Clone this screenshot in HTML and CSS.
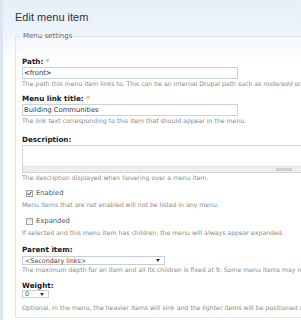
FILE: index.html
```html
<!DOCTYPE html>
<html lang="en">
<head>
    <meta charset="UTF-8">
    <title>Edit menu item</title>
    <link rel="stylesheet" href="styles.css">
</head>
<body>
<div id="page">
    <h2 class="page-title">Edit menu item</h2>
    <fieldset class="settings">
        <legend>Menu settings</legend>
        <div class="form-item">
            <label>Path: <span class="req">*</span></label>
            <input type="text" class="text" value="&lt;front&gt;">
            <div class="desc">The path this menu item links to. This can be an internal Drupal path such as <em>node/add</em> or an external URL.</div>
        </div>
        <div class="form-item item-title">
            <label>Menu link title: <span class="req">*</span></label>
            <input type="text" class="text" value="Building Communities">
            <div class="desc">The link text corresponding to this item that should appear in the menu.</div>
        </div>
        <div class="form-item">
            <label>Description:</label>
            <div class="area">
                <div class="area-bar"><span class="thumb"></span></div>
            </div>
            <div class="desc">The description displayed when hovering over a menu item.</div>
        </div>
        <div class="form-item check item-enabled">
            <div class="check-row">
                <span class="box">
                    <svg width="5" height="5" viewBox="0 0 5 5"><polyline points="0.6,2.6 1.9,4 4.4,0.8" fill="none" stroke="#2c3f66" stroke-width="1"/></svg>
                </span>Enabled
            </div>
            <div class="desc">Menu items that are not enabled will not be listed in any menu.</div>
        </div>
        <div class="form-item check item-expanded">
            <div class="check-row"><span class="box"></span>Expanded</div>
            <div class="desc">If selected and this menu item has children, the menu will always appear expanded.</div>
        </div>
        <div class="form-item item-parent">
            <label>Parent item:</label>
            <div class="select parent"><span>&lt;Secondary links&gt;</span><span class="arrow"></span></div>
            <div class="desc">The maximum depth for an item and all its children is fixed at 9. Some menu items may not be available as parents.</div>
        </div>
        <div class="form-item">
            <label>Weight:</label>
            <div class="select weight"><span>0</span><span class="arrow"></span></div>
            <div class="desc weight-desc">Optional. In the menu, the heavier items will sink and the lighter items will be positioned nearer the top.</div>
        </div>
    </fieldset>
</div>
</body>
</html>
```

FILE: styles.css
```css
*{
    padding: 0;
    margin: 0;
    box-sizing: border-box;
}
body{
    width: 301px;
    height: 320px;
    overflow: hidden;
    background: linear-gradient(#e7eff8 0, #edf3fa 30px, #ffffff 60px);
    border-left: 3px solid #dbe6f2;
    font-family: "DejaVu Sans", Verdana, sans-serif;
    color: #333;
}
#page{
    padding: 11px 0 0 12px;
    width: 420px;
}
.page-title{
    font-family: "Liberation Sans", Arial, sans-serif;
    font-weight: normal;
    font-size: 11px;
    line-height: 13px;
    color: #333;
    margin-bottom: 8px;
}
.settings{
    border: 1px solid #dce6f0;
    border-right: none;
    padding: 15px 0 0 6px;
    background: linear-gradient(#f5f8fc, #ffffff 30px);
}
.settings legend{
    font-size: 7px;
    line-height: 9px;
    color: #666;
    padding: 0 1px;
}
.form-item{
    margin-bottom: 5px;
}
.form-item label{
    display: block;
    font-size: 7.2px;
    font-weight: bold;
    line-height: 11px;
    color: #1a1a1a;
}
.req{
    color: #f0a22c;
}
.text{
    display: block;
    width: 216px;
    height: 12px;
    border: 1px solid #c5d3e1;
    font-family: "DejaVu Sans", Verdana, sans-serif;
    font-size: 6.8px;
    padding: 0 1px;
    color: #333;
    background: #fff;
    outline: none;
}
.desc{
    font-size: 6.2px;
    line-height: 9px;
    color: #8a8a8a;
    white-space: nowrap;
}
.desc em{
    font-style: italic;
}
.item-title{
    margin-bottom: 9px;
}
.area{
    width: 300px;
    height: 28px;
    border: 1px solid #d3d3d3;
    border-right: none;
    background: #fff;
    display: flex;
    flex-direction: column;
    justify-content: flex-end;
}
.area-bar{
    height: 6px;
    background: #eeeeee;
    border-top: 1px solid #e3e3e3;
    display: flex;
    align-items: center;
    padding-left: 253px;
}
.thumb{
    width: 16px;
    height: 3px;
    background: #d0d0d0;
}
.check-row{
    display: flex;
    align-items: center;
    font-size: 6.8px;
    line-height: 12px;
    color: #555;
    padding-left: 4px;
}
.check .desc{
    margin-top: 1px;
}
.item-enabled{
    margin-bottom: 6px;
}
.item-expanded{
    margin-bottom: 7px;
}
.box{
    width: 7px;
    height: 7px;
    border: 1px solid #a3a3a3;
    background: linear-gradient(#e6e6e6, #f8f8f8);
    margin-right: 3px;
    display: flex;
    align-items: center;
    justify-content: center;
}
.select{
    display: flex;
    align-items: center;
    justify-content: space-between;
    height: 9px;
    margin-top: 1px;
    border: 1px solid #c9ced5;
    font-size: 6.4px;
    color: #444;
    padding: 0 4px 0 2px;
    background: #fff;
}
.parent{
    width: 143px;
}
.item-parent{
    margin-bottom: 6px;
}
.weight{
    width: 27px;
    height: 8px;
    margin-top: -1px;
}
.weight-desc{
    margin-top: 5px;
}
.arrow{
    width: 0;
    height: 0;
    border-left: 2px solid transparent;
    border-right: 2px solid transparent;
    border-top: 3px solid #333;
}
```
